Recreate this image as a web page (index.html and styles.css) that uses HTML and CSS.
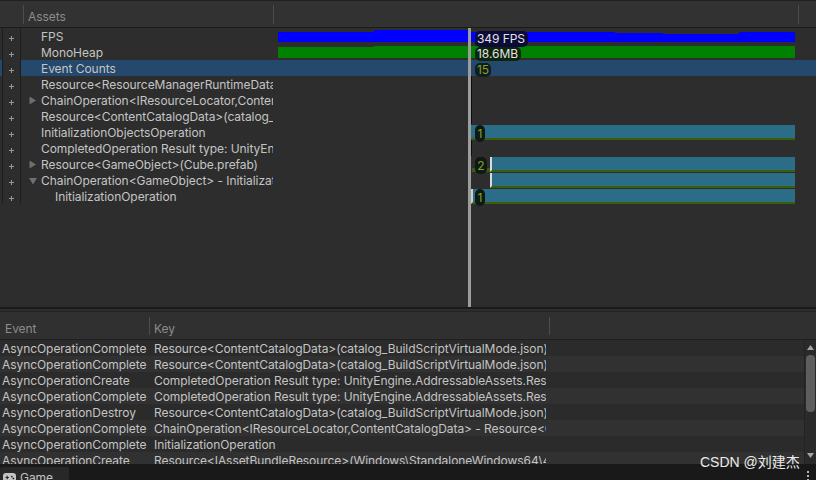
FILE: index.html
```html
<!DOCTYPE html>
<html>
<head>
<meta charset="utf-8">
<link rel="stylesheet" href="styles.css">
</head>
<body>
<div class="window">
  <div class="top-panel">
    <div class="col-header">
      <div class="hc hc-plus"></div>
      <div class="sep"></div>
      <div class="hc hc-name">Assets</div>
      <div class="sep"></div>
      <div class="hc hc-graph"></div>
      <div class="sep"></div>
    </div>

    <div class="row">
      <div class="edge"></div>
      <div class="plus"><svg width="5" height="5"><path d="M2.5 0v5M0 2.5h5" stroke="#999"/></svg></div>
      <div class="name"><span class="tw"></span>FPS</div>
      <div class="graph">
        <svg class="spark" width="543" height="16"><path d="M5 4H101V2H195V4H342V5H390V6H466V4H522V14H5Z" fill="#0000ff"/></svg>
        <span class="badge b-fps">349 FPS</span>
      </div>
    </div>
    <div class="row">
      <div class="edge"></div>
      <div class="plus"><svg width="5" height="5"><path d="M2.5 0v5M0 2.5h5" stroke="#999"/></svg></div>
      <div class="name"><span class="tw"></span>MonoHeap</div>
      <div class="graph">
        <svg class="spark" width="543" height="16"><path d="M5 3H101V2H522V14H5Z" fill="#008200"/></svg>
        <span class="badge b-mem">18.6MB</span>
      </div>
    </div>
    <div class="row sel">
      <div class="edge"></div>
      <div class="plus"><svg width="5" height="5"><path d="M2.5 0v5M0 2.5h5" stroke="#999"/></svg></div>
      <div class="name"><span class="tw"></span>Event Counts</div>
      <div class="graph"><span class="badge b-cnt">15</span></div>
    </div>
    <div class="row">
      <div class="edge"></div>
      <div class="plus"><svg width="5" height="5"><path d="M2.5 0v5M0 2.5h5" stroke="#999"/></svg></div>
      <div class="name"><span class="tw"></span>Resource&lt;ResourceManagerRuntimeData&gt;</div>
      <div class="graph"><span class="tick"></span></div>
    </div>
    <div class="row">
      <div class="edge"></div>
      <div class="plus"><svg width="5" height="5"><path d="M2.5 0v5M0 2.5h5" stroke="#999"/></svg></div>
      <div class="name"><span class="tw"><svg width="8" height="9"><path d="M0.5 0.5L7 4.5L0.5 8.5Z" fill="#6f6f6f"/></svg></span>ChainOperation&lt;IResourceLocator,ContentCatalogData&gt; - Resource&lt;ContentCatalogData&gt;</div>
      <div class="graph"><span class="tick"></span></div>
    </div>
    <div class="row">
      <div class="edge"></div>
      <div class="plus"><svg width="5" height="5"><path d="M2.5 0v5M0 2.5h5" stroke="#999"/></svg></div>
      <div class="name"><span class="tw"></span>Resource&lt;ContentCatalogData&gt;(catalog_BuildScriptVirtualMode.json)</div>
      <div class="graph"><span class="tick"></span></div>
    </div>
    <div class="row">
      <div class="edge"></div>
      <div class="plus"><svg width="5" height="5"><path d="M2.5 0v5M0 2.5h5" stroke="#999"/></svg></div>
      <div class="name"><span class="tw"></span>InitializationObjectsOperation</div>
      <div class="graph"><span class="bar"></span><span class="pill">1</span></div>
    </div>
    <div class="row">
      <div class="edge"></div>
      <div class="plus"><svg width="5" height="5"><path d="M2.5 0v5M0 2.5h5" stroke="#999"/></svg></div>
      <div class="name"><span class="tw"></span>CompletedOperation Result type: UnityEngine.AddressableAssets.ResourceLocators</div>
      <div class="graph"><span class="tick"></span></div>
    </div>
    <div class="row">
      <div class="edge"></div>
      <div class="plus"><svg width="5" height="5"><path d="M2.5 0v5M0 2.5h5" stroke="#999"/></svg></div>
      <div class="name"><span class="tw"><svg width="8" height="9"><path d="M0.5 0.5L7 4.5L0.5 8.5Z" fill="#6f6f6f"/></svg></span>Resource&lt;GameObject&gt;(Cube.prefab)</div>
      <div class="graph"><span class="seg"></span><span class="bar wl"></span><span class="pill p2">2</span></div>
    </div>
    <div class="row">
      <div class="edge"></div>
      <div class="plus"><svg width="5" height="5"><path d="M2.5 0v5M0 2.5h5" stroke="#999"/></svg></div>
      <div class="name"><span class="tw"><svg width="8" height="8"><path d="M0 1H8L4 7.5Z" fill="#6f6f6f"/></svg></span>ChainOperation&lt;GameObject&gt; - InitializationOperation</div>
      <div class="graph"><span class="bar wl"></span></div>
    </div>
    <div class="row">
      <div class="edge"></div>
      <div class="plus"><svg width="5" height="5"><path d="M2.5 0v5M0 2.5h5" stroke="#999"/></svg></div>
      <div class="name child"><span class="tw"></span>InitializationOperation</div>
      <div class="graph"><span class="bar wl0"></span><span class="pill">1</span></div>
    </div>

    <div class="cursor"></div>
  </div>

  <div class="splitter"></div>

  <div class="list-header">
    <div class="lh lh-event">Event</div>
    <div class="sep sep2"></div>
    <div class="lh lh-key">Key</div>
    <div class="sep sep2"></div>
  </div>

  <div class="list">
    <div class="rows">
      <div class="lrow"><div class="ev">AsyncOperationComplete</div><div class="key">Resource&lt;ContentCatalogData&gt;(catalog_BuildScriptVirtualMode.json)</div></div>
      <div class="lrow"><div class="ev">AsyncOperationComplete</div><div class="key">Resource&lt;ContentCatalogData&gt;(catalog_BuildScriptVirtualMode.json)</div></div>
      <div class="lrow"><div class="ev">AsyncOperationCreate</div><div class="key">CompletedOperation Result type: UnityEngine.AddressableAssets.ResourceLocators</div></div>
      <div class="lrow"><div class="ev">AsyncOperationComplete</div><div class="key">CompletedOperation Result type: UnityEngine.AddressableAssets.ResourceLocators</div></div>
      <div class="lrow"><div class="ev">AsyncOperationDestroy</div><div class="key">Resource&lt;ContentCatalogData&gt;(catalog_BuildScriptVirtualMode.json)</div></div>
      <div class="lrow"><div class="ev">AsyncOperationComplete</div><div class="key">ChainOperation&lt;IResourceLocator,ContentCatalogData&gt; - Resource&lt;ContentCatalogData&gt;</div></div>
      <div class="lrow"><div class="ev">AsyncOperationComplete</div><div class="key">InitializationOperation</div></div>
      <div class="lrow"><div class="ev">AsyncOperationCreate</div><div class="key">Resource&lt;IAssetBundleResource&gt;(Windows\StandaloneWindows64\4a</div></div>
    </div>
    <div class="scrollbar">
      <svg width="7" height="5"><path d="M0 5L3.5 0L7 5Z" fill="#a3a3a3"/></svg>
      <div class="thumb"></div>
      <svg class="down" width="7" height="5"><path d="M0 0L3.5 5L7 0Z" fill="#a3a3a3"/></svg>
    </div>
  </div>

  <div class="tabbar">
    <div class="tab">
      <svg class="pad" width="13" height="9" viewBox="0 0 13 9"><rect x="0" y="0" width="13" height="9" rx="3" fill="#c4c4c4"/><path d="M2.5 4.5h3.4M4.2 2.8v3.4" stroke="#282828" stroke-width="1.2"/><circle cx="8.8" cy="3.6" r="0.9" fill="#282828"/><circle cx="10.4" cy="5.4" r="0.9" fill="#282828"/></svg>
      <span>Game</span>
    </div>
    <svg class="kebab" width="2" height="10"><rect x="0" y="0" width="2" height="2" fill="#b5b5b5"/><rect x="0" y="4" width="2" height="2" fill="#b5b5b5"/><rect x="0" y="8" width="2" height="2" fill="#b5b5b5"/></svg>
  </div>

  <div class="watermark">CSDN @刘建杰</div>
</div>
</body>
</html>
```

FILE: styles.css
```css
* { box-sizing: border-box; margin: 0; padding: 0; }

html, body {
  width: 816px;
  height: 480px;
  overflow: hidden;
  background: #2d2d2d;
}

body {
  font-family: Inter, "Noto Sans", sans-serif;
  font-size: 12px;
  line-height: 16px;
  letter-spacing: -0.06px;
  color: #c4c4c4;
}

.window {
  position: relative;
  display: flex;
  flex-direction: column;
  height: 480px;
}

/* ---------- top panel ---------- */
.top-panel {
  position: relative;
  height: 307px;
  flex: none;
  border-top: 1px solid #1f1f1f;
  background: #2d2d2d;
}

.col-header {
  display: flex;
  height: 27px;
  background: #323232;
  border-bottom: 1px solid #1b1b1b;
}

.hc {
  display: flex;
  align-items: flex-end;
  padding-bottom: 2px;
  color: #8c8c8c;
}

.hc-plus { width: 23px; }
.hc-name { width: 249px; padding-left: 4px; }
.hc-graph { width: 524px; }

.sep {
  width: 1px;
  flex: none;
  background: #4d4d4d;
  margin: 4px 0 3px;
}

.row {
  display: grid;
  grid-template-columns: 3px 18px 252px 543px;
  height: 16px;
}

.edge { border-right: 1px solid #1d1d1d; }

.plus {
  border-right: 1px solid #1d1d1d;
  display: flex;
  justify-content: center;
  align-items: flex-start;
  padding-top: 8px;
}

.plus svg { display: block; }

.name {
  display: flex;
  align-items: center;
  padding: 1px 0 0 8px;
  overflow: hidden;
  white-space: nowrap;
}

.name.child { padding-left: 22px; }

.tw {
  width: 12px;
  flex: none;
  display: flex;
  align-items: center;
}

.tw svg { display: block; }

.graph { position: relative; }

.sel .edge,
.sel .name,
.sel .graph { background: #24496c; }

.spark {
  position: absolute;
  left: 0;
  top: 0;
  display: block;
}

.badge {
  position: absolute;
  left: 202px;
  top: 3px;
  height: 16px;
  padding: 0 2px;
  border-radius: 5px;
  line-height: 16px;
  color: #e2e2e2;
  white-space: nowrap;
  z-index: 1;
}

.b-fps { background: #0b0b3a; width: 53px; }
.b-mem { background: #0b240b; width: 46px; height: 14px; line-height: 14px; }
.b-cnt {
  background: #0f1c24;
  color: #86a41c;
  width: 16px;
  height: 14px;
  line-height: 14px;
  padding: 0;
  text-align: center;
}

.tick {
  position: absolute;
  left: 198px;
  top: 0;
  width: 1px;
  height: 16px;
  background: #0c0c0c;
}

.bar {
  position: absolute;
  left: 198px;
  right: 21px;
  top: 1px;
  height: 15px;
  background: #2b6c87;
  border-bottom: 2px solid #3c5d0e;
}

.bar.wl { left: 217px; border-left: 2px solid #dadada; }
.bar.wl0 { border-left: 2px solid #cfcfcf; }

.seg {
  position: absolute;
  left: 199px;
  top: 1px;
  width: 18px;
  height: 15px;
  border-bottom: 4px solid #3c5d0e;
}

.pill {
  position: absolute;
  left: 202px;
  top: 1px;
  width: 10px;
  height: 17px;
  border-radius: 5px;
  background: #0d1914;
  color: #86a41c;
  text-align: center;
  line-height: 17px;
  z-index: 1;
}

.pill.p2 { width: 12px; }

.cursor {
  position: absolute;
  left: 468px;
  top: 27px;
  width: 3px;
  height: 279px;
  background: #9c9c9c;
}

/* ---------- splitter + event list ---------- */
.splitter {
  height: 5px;
  flex: none;
  border-top: 2px solid #1b1b1b;
  border-bottom: 1px solid #242424;
  background: #2d2d2d;
}

.list-header {
  display: flex;
  height: 28px;
  flex: none;
  background: #303030;
  border-bottom: 1px solid #1e1e1e;
}

.lh {
  display: flex;
  align-items: flex-end;
  padding-bottom: 2px;
  color: #8c8c8c;
}

.lh-event { width: 149px; padding-left: 5px; }
.lh-key { width: 399px; padding-left: 4px; }
.sep2 { margin: 5px 0 4px; }

.list {
  display: flex;
  height: 124px;
  flex: none;
}

.rows {
  flex: 1;
  overflow: hidden;
}

.lrow {
  display: grid;
  grid-template-columns: 150px 396px;
  height: 16px;
  background: #2b2b2b;
}

.lrow:nth-child(even) { background: #313131; }

.ev {
  padding: 1px 0 0 2px;
  white-space: nowrap;
  overflow: hidden;
}

.key {
  padding: 1px 0 0 4px;
  white-space: nowrap;
  overflow: hidden;
}

.scrollbar {
  width: 12px;
  flex: none;
  display: flex;
  flex-direction: column;
  align-items: center;
  background: #2a2a2a;
  border-left: 1px solid #232323;
  padding: 5px 0 6px;
}

.scrollbar svg { display: block; flex: none; }

.thumb {
  width: 9px;
  height: 57px;
  margin-top: 5px;
  border-radius: 4px;
  background: #5e5e5e;
  flex: none;
}

.scrollbar .down { margin-top: auto; }

/* ---------- bottom tab bar ---------- */
.tabbar {
  height: 16px;
  flex: none;
  display: flex;
  background: #191919;
}

.tab {
  width: 69px;
  margin-top: 3px;
  background: #282828;
  display: flex;
  align-items: flex-start;
  gap: 4px;
  padding: 3px 0 0 3px;
  border-radius: 2px 2px 0 0;
}

.tab .pad { display: block; margin-top: 3px; flex: none; }

.kebab {
  display: block;
  margin: 7px 7px 0 auto;
}

.watermark {
  position: absolute;
  left: 700px;
  top: 454px;
  font-family: "Liberation Sans", "Noto Sans CJK SC", sans-serif;
  font-size: 14px;
  line-height: 16px;
  letter-spacing: 0;
  color: #ececec;
  white-space: nowrap;
}
```
